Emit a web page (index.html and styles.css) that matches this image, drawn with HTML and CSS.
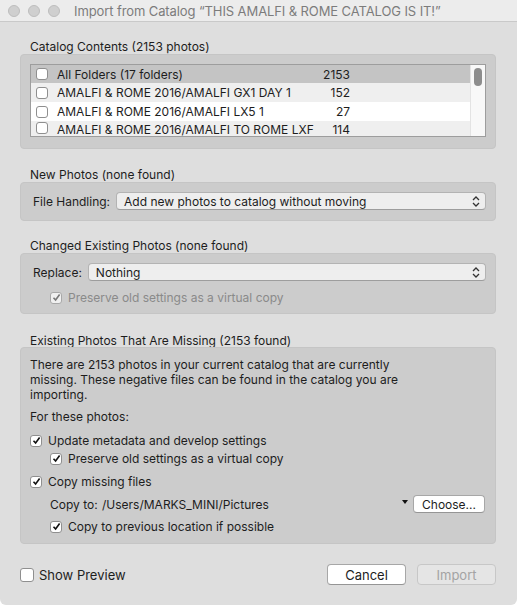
FILE: index.html
```html
<!DOCTYPE html>
<html>
<head>
<meta charset="utf-8">
<link rel="stylesheet" href="styles.css">
</head>
<body>
<div class="window">
  <div class="titlebar">
    <div class="lights"><span></span><span></span><span></span></div>
    <div class="title">Import from Catalog “THIS AMALFI &amp; ROME CATALOG IS IT!”</div>
  </div>
  <div class="content">
    <div class="sec-label l1">Catalog Contents (2153 photos)</div>
    <div class="box box1">
      <div class="list">
        <div class="rows">
          <div class="row r-head"><span class="cb"></span><span class="name">All Folders (17 folders)</span><span class="count">2153</span></div>
          <div class="row r-alt"><span class="cb"></span><span class="name">AMALFI &amp; ROME 2016/AMALFI GX1 DAY 1</span><span class="count">152</span></div>
          <div class="row r-white"><span class="cb"></span><span class="name">AMALFI &amp; ROME 2016/AMALFI LX5 1</span><span class="count">27</span></div>
          <div class="row r-alt r-last"><span class="cb"></span><span class="name">AMALFI &amp; ROME 2016/AMALFI TO ROME LXF</span><span class="count">114</span></div>
        </div>
        <div class="scroll"><div class="thumb"></div></div>
      </div>
    </div>

    <div class="sec-label l2">New Photos (none found)</div>
    <div class="box box2">
      <div class="field">
        <span class="flabel">File Handling:</span>
        <div class="select sel-file"><span>Add new photos to catalog without moving</span>
          <svg class="chev" width="8" height="11" viewBox="0 0 8 11"><path d="M1 4 L4 1 L7 4 M1 7 L4 10 L7 7" fill="none" stroke="#333" stroke-width="1.3"/></svg>
        </div>
      </div>
    </div>

    <div class="sec-label l3">Changed Existing Photos (none found)</div>
    <div class="box box3">
      <div class="field">
        <span class="flabel">Replace:</span>
        <div class="select sel-replace"><span>Nothing</span>
          <svg class="chev" width="8" height="11" viewBox="0 0 8 11"><path d="M1 4 L4 1 L7 4 M1 7 L4 10 L7 7" fill="none" stroke="#333" stroke-width="1.3"/></svg>
        </div>
      </div>
      <div class="check indent disabled"><span class="cb on"><svg width="9" height="9" viewBox="0 0 9 9"><path d="M1.5 4.8 L3.6 7 L7.6 1.6" fill="none" stroke="#777" stroke-width="1.6"/></svg></span><span>Preserve old settings as a virtual copy</span></div>
    </div>

    <div class="sec-label l4">Existing Photos That Are Missing (2153 found)</div>
    <div class="box box4">
      <p class="msg">There are 2153 photos in your current catalog that are currently missing. These negative files can be found in the catalog you are importing.</p>
      <p class="for">For these photos:</p>
      <div class="check c-update"><span class="cb on"><svg width="9" height="9" viewBox="0 0 9 9"><path d="M1.5 4.8 L3.6 7 L7.6 1.6" fill="none" stroke="#111" stroke-width="1.6"/></svg></span><span>Update metadata and develop settings</span></div>
      <div class="check indent c-preserve"><span class="cb on"><svg width="9" height="9" viewBox="0 0 9 9"><path d="M1.5 4.8 L3.6 7 L7.6 1.6" fill="none" stroke="#111" stroke-width="1.6"/></svg></span><span>Preserve old settings as a virtual copy</span></div>
      <div class="check c-copy"><span class="cb on"><svg width="9" height="9" viewBox="0 0 9 9"><path d="M1.5 4.8 L3.6 7 L7.6 1.6" fill="none" stroke="#111" stroke-width="1.6"/></svg></span><span>Copy missing files</span></div>
      <div class="copyto">
        <span class="ct-label">Copy to:</span>
        <span class="ct-path">/Users/MARKS_MINI/Pictures</span>
        <span class="tri"></span>
        <button class="btn choose">Choose...</button>
      </div>
      <div class="check indent c-prev"><span class="cb on"><svg width="9" height="9" viewBox="0 0 9 9"><path d="M1.5 4.8 L3.6 7 L7.6 1.6" fill="none" stroke="#111" stroke-width="1.6"/></svg></span><span>Copy to previous location if possible</span></div>
    </div>
  </div>
  <div class="footer">
    <div class="check big"><span class="cb"></span><span>Show Preview</span></div>
    <div class="buttons">
      <button class="btn action">Cancel</button>
      <button class="btn action off">Import</button>
    </div>
  </div>
</div>
</body>
</html>
```

FILE: styles.css
```css
* { box-sizing: border-box; }
html, body { margin: 0; padding: 0; background: #ffffff; }
body {
  font-family: Inter, "Liberation Sans", sans-serif;
  font-size: 12px;
  color: #1d1d1d;
}
.window {
  width: 517px;
  height: 605px;
  background: #dedede;
  border-radius: 0 0 6px 6px;
  overflow: hidden;
  display: flex;
  flex-direction: column;
}
.titlebar {
  height: 22px;
  background: #ececec;
  border-bottom: 1px solid #c9c9c9;
  display: flex;
  align-items: center;
  flex-shrink: 0;
}
.lights { display: flex; gap: 8px; padding-left: 8px; }
.lights span {
  width: 12px; height: 12px; border-radius: 50%;
  background: #cfcfcf; border: 1px solid #bdbdbd;
}
.title {
  margin-left: 14px;
  font-size: 13px;
  color: #7c7c7c;
  letter-spacing: -0.1px;
}
.content {
  padding: 18px 21px 0 20px;
  display: flex;
  flex-direction: column;
}
.sec-label {
  line-height: 14px;
  padding-left: 10px;
  height: 14px;
}
.l2 { margin-top: 19px; }
.l3 { margin-top: 18px; }
.l4 { margin-top: 20px; height: 13px; line-height: 13px; }
.box {
  background: #cccccc;
  border: 1px solid #c5c5c5;
  border-radius: 4px;
}
.box1 { height: 95px; padding: 9px 9px 0 9px; }
.list {
  height: 73px;
  border: 1px solid #9d9d9d;
  background: #ffffff;
  display: flex;
}
.rows { flex: 1; overflow: hidden; }
.row {
  height: 19px;
  display: flex;
  align-items: center;
  padding-left: 5px;
  padding-right: 120px;
}
.r-head { background: #c4c4c4; height: 18px; }
.r-alt { background: #efefef; }
.r-white { background: #ffffff; }
.r-last { height: 15px; align-items: flex-start; padding-top: 1px; overflow: hidden; }
.row .name { flex: 1; margin-left: 9px; white-space: nowrap; }
.row .count { text-align: right; }
.cb {
  width: 12px; height: 12px;
  border: 1px solid #8f8f8f;
  border-radius: 3px;
  background: #ffffff;
  display: inline-flex;
  align-items: center;
  justify-content: center;
  flex-shrink: 0;
}
.scroll {
  width: 15px;
  background: #f8f8f8;
  border-left: 1px solid #e3e3e3;
  padding: 3px 0 0 3px;
}
.thumb { width: 8px; height: 18px; border-radius: 4px; background: #8d8d8d; }

.box2 { height: 39px; padding: 9px 9px 0 12px; }
.field { display: flex; align-items: center; }
.flabel { white-space: nowrap; margin-right: 6px; }
.select {
  flex: 1;
  height: 18px;
  background: #eeeeee;
  border: 1px solid #b3b3b3;
  border-bottom-color: #9d9d9d;
  border-radius: 4px;
  display: flex;
  align-items: center;
  padding-left: 7px;
  padding-right: 5px;
}
.select span { flex: 1; }
.chev { flex-shrink: 0; }

.box3 { height: 61px; padding: 9px 9px 0 12px; }
.check { display: flex; align-items: center; gap: 6px; height: 15px; }
.indent { padding-left: 20px; }
.box3 .check { margin-top: 9px; padding-left: 17px; }
.check.disabled { color: #8a8a8a; }
.check.disabled .cb { border-color: #a8a8a8; background: #f0f0f0; }

.box4 { height: 197px; padding: 9px 9px 0 9px; }
.msg { margin: 0; line-height: 15px; width: 405px; }
.for { margin: 7px 0 0 0; line-height: 15px; }
.c-update { margin-top: 9px; }
.c-preserve { margin-top: 3px; }
.c-copy { margin-top: 8px; }
.copyto { display: flex; align-items: center; height: 18px; margin-top: 6px; padding-left: 20px; }
.ct-label { width: 52px; }
.ct-path { flex: 1; }
.tri {
  width: 0; height: 0;
  border-left: 3.5px solid transparent;
  border-right: 3.5px solid transparent;
  border-top: 4px solid #111;
  margin-right: 5px;
  margin-top: -5px;
}
.btn {
  font-family: Inter, "Liberation Sans", sans-serif;
  background: #ffffff;
  border: 1px solid #a7a7a7;
  border-bottom-color: #959595;
  border-radius: 4px;
  color: #1d1d1d;
  padding: 0;
}
.choose { width: 72px; height: 18px; font-size: 12px; margin-right: 1px; }
.c-prev { margin-top: 6px; }

.footer {
  display: flex;
  align-items: center;
  justify-content: space-between;
  padding: 20px 21px 0 20px;
}
.check.big { font-size: 13px; gap: 5px; }
.check.big .cb { width: 14px; height: 14px; border-radius: 3px; }
.buttons { display: flex; gap: 11px; }
.action { width: 79px; height: 21px; font-size: 13px; }
.action.off { background: #e5e5e5; border-color: #c7c7c7; color: #a3a3a3; }
```
